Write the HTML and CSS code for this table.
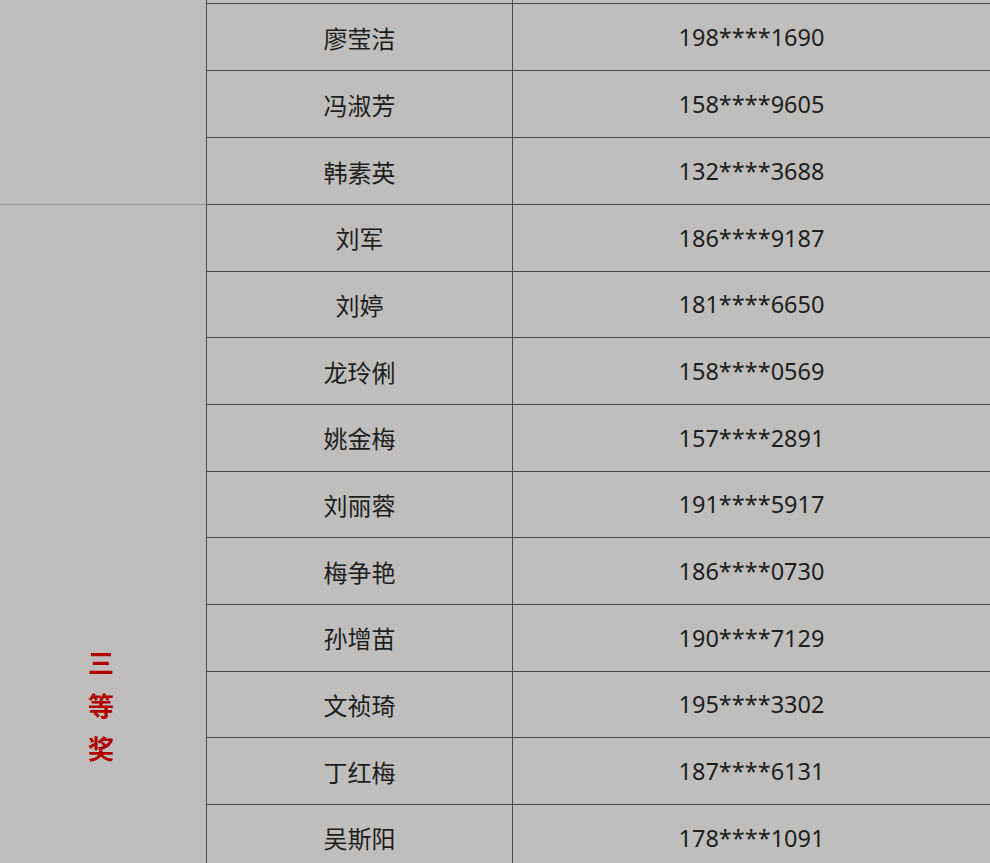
FILE: index.html
```html
<!DOCTYPE html>
<html lang="zh-CN">
<head>
<meta charset="utf-8">
<title>获奖名单</title>
<link rel="stylesheet" href="styles.css">
</head>
<body>
<div class="table">
  <div class="group group-first">
    <div class="label label-first"></div>
    <div class="rows">
      <div class="row row-clip"><div class="cell name"></div><div class="cell phone"></div></div>
      <div class="row"><div class="cell name">廖莹洁</div><div class="cell phone">198****1690</div></div>
      <div class="row"><div class="cell name">冯淑芳</div><div class="cell phone">158****9605</div></div>
      <div class="row"><div class="cell name">韩素英</div><div class="cell phone">132****3688</div></div>
    </div>
  </div>
  <div class="group">
    <div class="label label-third"><span class="prize">三<br>等<br>奖</span></div>
    <div class="rows">
      <div class="row"><div class="cell name">刘军</div><div class="cell phone">186****9187</div></div>
      <div class="row"><div class="cell name">刘婷</div><div class="cell phone">181****6650</div></div>
      <div class="row"><div class="cell name">龙玲俐</div><div class="cell phone">158****0569</div></div>
      <div class="row"><div class="cell name">姚金梅</div><div class="cell phone">157****2891</div></div>
      <div class="row"><div class="cell name">刘丽蓉</div><div class="cell phone">191****5917</div></div>
      <div class="row"><div class="cell name">梅争艳</div><div class="cell phone">186****0730</div></div>
      <div class="row"><div class="cell name">孙增苗</div><div class="cell phone">190****7129</div></div>
      <div class="row"><div class="cell name">文祯琦</div><div class="cell phone">195****3302</div></div>
      <div class="row"><div class="cell name">丁红梅</div><div class="cell phone">187****6131</div></div>
      <div class="row"><div class="cell name">吴斯阳</div><div class="cell phone">178****1091</div></div>
    </div>
  </div>
</div>
</body>
</html>
```

FILE: styles.css
```css
:root {
  --row: 66.67px;
  --line: #4a4a4a;
}
html, body {
  margin: 0;
  padding: 0;
  overflow: hidden;
  background: #bfbebc;
}
body {
  font-family: "Noto Sans", "Noto Sans CJK SC", sans-serif;
  color: #1e1e1e;
}
.table {
  display: flex;
  flex-direction: column;
  width: 990px;
}
.group {
  display: flex;
}
.label {
  flex: none;
  border-right: 1px solid var(--line);
  display: flex;
  align-items: center;
  justify-content: center;
  box-sizing: border-box;
  width: 207px;
}
.label-third {
  border-top: 1px solid #9c9b99;
  height: calc(15 * var(--row));
  padding-right: 4px;
}
.prize {
  font-family: "Noto Sans CJK SC", sans-serif;
  font-weight: 700;
  font-size: 26px;
  line-height: 43px;
  color: #b00000;
  text-align: center;
}
.rows {
  flex: 1;
  display: flex;
  flex-direction: column;
}
.row {
  display: flex;
  height: var(--row);
  box-sizing: border-box;
  border-top: 1px solid var(--line);
}
.group-first .row {
  height: 67px;
}
.group-first .row-clip {
  height: 3px;
  border-top: none;
}
.cell {
  display: flex;
  align-items: center;
  justify-content: center;
  font-size: 24px;
}
.name {
  width: 306px;
  flex: none;
  box-sizing: border-box;
  border-right: 1px solid var(--line);
  font-family: "Noto Sans CJK SC", sans-serif;
}
.phone {
  flex: 1;
  font-family: "Noto Sans", "Noto Sans CJK SC", sans-serif;
  font-size: 23.5px;
}
```
